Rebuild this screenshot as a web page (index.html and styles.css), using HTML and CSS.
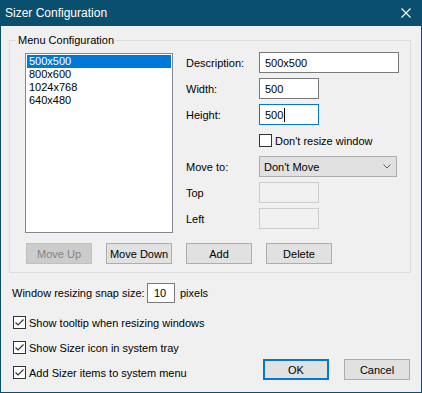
FILE: index.html
```html
<!DOCTYPE html>
<html lang="en">
<head>
    <meta charset="UTF-8">
    <title>Sizer Configuration</title>
    <link rel="stylesheet" href="styles.css">
</head>
<body>
    <div class="window">
        <div class="titlebar">
            <span class="title">Sizer Configuration</span>
            <svg class="close" width="10" height="10" viewBox="0 0 10 10">
                <path d="M0.5 0.5 L9.5 9.5 M9.5 0.5 L0.5 9.5" stroke="#fff" stroke-width="1.1" fill="none"/>
            </svg>
        </div>

        <div class="client">
            <div class="group">
                <span class="group-title">Menu Configuration</span>
                <div class="group-top">
                    <ul class="listbox">
                        <li class="selected">500x500</li>
                        <li>800x600</li>
                        <li>1024x768</li>
                        <li>640x480</li>
                    </ul>
                    <div class="form">
                        <div class="field">
                            <span class="label">Description:</span>
                            <div class="edit wide">500x500</div>
                        </div>
                        <div class="field">
                            <span class="label">Width:</span>
                            <div class="edit">500</div>
                        </div>
                        <div class="field">
                            <span class="label">Height:</span>
                            <div class="edit focused">500<span class="caret"></span></div>
                        </div>
                        <div class="field check-field">
                            <span class="label"></span>
                            <span class="checkbox"></span>
                            <span>Don't resize window</span>
                        </div>
                        <div class="field combo-field">
                            <span class="label">Move to:</span>
                            <div class="combo">
                                <span>Don't Move</span>
                                <svg width="8" height="5" viewBox="0 0 8 5">
                                    <path d="M0.5 0.5 L4 4 L7.5 0.5" stroke="#606060" fill="none"/>
                                </svg>
                            </div>
                        </div>
                        <div class="field">
                            <span class="label">Top</span>
                            <div class="edit disabled"></div>
                        </div>
                        <div class="field">
                            <span class="label">Left</span>
                            <div class="edit disabled"></div>
                        </div>
                    </div>
                </div>
                <div class="btn-row">
                    <button class="btn" disabled>Move Up</button>
                    <button class="btn">Move Down</button>
                    <button class="btn">Add</button>
                    <button class="btn">Delete</button>
                </div>
            </div>

            <div class="snap-row">
                <span class="snap-label">Window resizing snap size:</span>
                <div class="edit snap">10</div>
                <span class="pixels">pixels</span>
            </div>

            <div class="bottom">
                <div class="checks">
                    <div class="check-row"><span class="checkbox checked"></span>Show tooltip when resizing windows</div>
                    <div class="check-row"><span class="checkbox checked"></span>Show Sizer icon in system tray</div>
                    <div class="check-row"><span class="checkbox checked"></span>Add Sizer items to system menu</div>
                </div>
                <div class="dialog-buttons">
                    <button class="btn default">OK</button>
                    <button class="btn">Cancel</button>
                </div>
            </div>
        </div>
    </div>
</body>
</html>
```
FILE: styles.css
```css
body {
    margin: 0;
    font-family: 'Liberation Sans', Arial, sans-serif;
    font-size: 11px;
    color: #000;
    background: #f0f0f0;
}
.window {
    width: 422px;
    height: 393px;
    box-sizing: border-box;
    border: 1px solid #0a4f6d;
    border-top: 0;
    background: #f0f0f0;
    display: flex;
    flex-direction: column;
}
.titlebar {
    height: 26px;
    flex: none;
    margin: 0 -1px;
    background: #0a4f6d;
    color: #fff;
    display: flex;
    align-items: center;
    justify-content: space-between;
    padding: 0 11px 0 5px;
}
.title {
    font-size: 12px;
    margin-top: -1px;
}
.close {
    display: block;
    margin-top: -1px;
}
.client {
    flex: 1;
    display: flex;
    flex-direction: column;
}

/* menu configuration group */
.group {
    position: relative;
    margin: 14px 10px 0 8px;
    border: 1px solid #dcdcdc;
    padding: 11px 0 8px 15px;
}
.group-title {
    position: absolute;
    top: -7px;
    left: 6px;
    padding: 0 2px;
    line-height: 13px;
    background: #f0f0f0;
}
.group-top {
    display: flex;
}
.listbox {
    list-style: none;
    margin: 1px 0 0;
    padding: 1px;
    width: 148px;
    height: 180px;
    box-sizing: border-box;
    border: 1px solid #828790;
    background: #fff;
}
.listbox li {
    height: 13px;
    line-height: 13px;
    padding-left: 2px;
}
.listbox li.selected {
    background: #0078d7;
    color: #fff;
}
.form {
    margin-left: 13px;
    display: flex;
    flex-direction: column;
}
.field {
    display: flex;
    align-items: center;
    margin-bottom: 5px;
}
.label {
    width: 73px;
    flex: none;
}
.edit {
    width: 60px;
    height: 21px;
    box-sizing: border-box;
    border: 1px solid #7a7a7a;
    background: #fff;
    padding: 0 5px;
    display: flex;
    align-items: center;
}
.edit.wide {
    width: 140px;
}
.edit.focused {
    border-color: #0078d7;
}
.caret {
    width: 1px;
    height: 14px;
    background: #000;
    margin-left: 1px;
}
.edit.disabled {
    border-color: #cccccc;
    background: #f0f0f0;
}
.check-field {
    margin: 4px 0 9px;
}
.check-field .checkbox {
    margin-right: 3px;
}
.combo-field {
    margin-bottom: 5px;
}
.combo {
    width: 138px;
    height: 21px;
    box-sizing: border-box;
    border: 1px solid #adadad;
    background: #e1e1e1;
    padding: 0 5px 0 4px;
    display: flex;
    align-items: center;
    justify-content: space-between;
}
.combo svg {
    display: block;
}
.checkbox {
    width: 13px;
    height: 13px;
    box-sizing: border-box;
    border: 1px solid #333;
    background: #fff;
    flex: none;
    display: inline-block;
}
.checkbox.checked {
    background: #fff url("data:image/svg+xml,%3Csvg xmlns='http://www.w3.org/2000/svg' width='11' height='11'%3E%3Cpath d='M1.5 5.5 L4 8 L9.5 2.5' stroke='%23333' stroke-width='1.2' fill='none'/%3E%3C/svg%3E") no-repeat center;
}

/* buttons */
.btn-row {
    display: flex;
    gap: 14px;
    margin: 9px 0 0 1px;
}
.btn {
    width: 66px;
    height: 21px;
    box-sizing: border-box;
    margin: 0;
    padding: 0;
    border: 1px solid #adadad;
    background: #e1e1e1;
    font-family: inherit;
    font-size: 11px;
    color: #000;
}
.btn:disabled {
    background: #cccccc;
    border-color: #bfbfbf;
    color: #838383;
}
.btn.default {
    border: 2px solid #0078d7;
}

/* lower options */
.snap-row {
    display: flex;
    align-items: center;
    margin: 10px 0 0 11px;
}
.snap-label {
    width: 135px;
}
.edit.snap {
    width: 28px;
    height: 20px;
    padding: 0 0 0 6px;
}
.pixels {
    margin-left: 5px;
}
.bottom {
    display: flex;
    justify-content: space-between;
    align-items: flex-end;
    margin: 13px 11px 0 12px;
}
.checks {
    display: flex;
    flex-direction: column;
    gap: 12px;
}
.check-row {
    display: flex;
    align-items: center;
    height: 13px;
    gap: 3px;
}
.dialog-buttons {
    display: flex;
    gap: 15px;
    margin-bottom: -1px;
}
```
